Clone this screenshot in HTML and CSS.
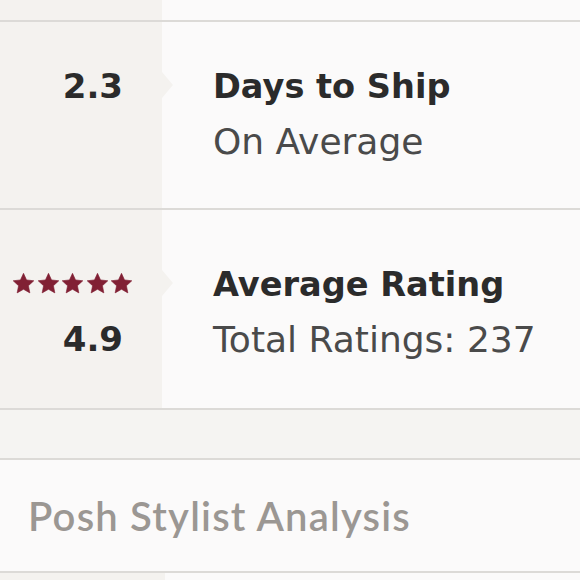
FILE: index.html
```html
<!DOCTYPE html>
<html lang="en">
<head>
<meta charset="utf-8">
<title>Seller stats</title>
<link rel="stylesheet" href="styles.css">
</head>
<body>
<div class="page">
  <div class="split split--top">
    <div class="side"></div>
    <div class="main"></div>
  </div>

  <div class="split stat stat--ship">
    <div class="side">
      <div class="line num">2.3</div>
    </div>
    <div class="main">
      <div class="line title">Days to Ship</div>
      <div class="line sub">On Average</div>
    </div>
  </div>

  <div class="split stat stat--rating">
    <div class="side">
      <div class="line stars">
        <svg class="star" viewBox="0 0 20 20"><path d="M10 0.3L12.9 6.6L19.8 7.42L14.7 12.1L16.05 18.93L10 15.5L3.95 18.93L5.3 12.1L0.2 7.42L7.1 6.6Z"/></svg>
        <svg class="star" viewBox="0 0 20 20"><path d="M10 0.3L12.9 6.6L19.8 7.42L14.7 12.1L16.05 18.93L10 15.5L3.95 18.93L5.3 12.1L0.2 7.42L7.1 6.6Z"/></svg>
        <svg class="star" viewBox="0 0 20 20"><path d="M10 0.3L12.9 6.6L19.8 7.42L14.7 12.1L16.05 18.93L10 15.5L3.95 18.93L5.3 12.1L0.2 7.42L7.1 6.6Z"/></svg>
        <svg class="star" viewBox="0 0 20 20"><path d="M10 0.3L12.9 6.6L19.8 7.42L14.7 12.1L16.05 18.93L10 15.5L3.95 18.93L5.3 12.1L0.2 7.42L7.1 6.6Z"/></svg>
        <svg class="star" viewBox="0 0 20 20"><path d="M10 0.3L12.9 6.6L19.8 7.42L14.7 12.1L16.05 18.93L10 15.5L3.95 18.93L5.3 12.1L0.2 7.42L7.1 6.6Z"/></svg>
      </div>
      <div class="line num">4.9</div>
    </div>
    <div class="main">
      <div class="line title">Average Rating</div>
      <div class="line sub">Total Ratings: 237</div>
    </div>
  </div>

  <div class="band"></div>

  <div class="section-head">Posh Stylist Analysis</div>

  <div class="split split--tail">
    <div class="side"></div>
    <div class="main"></div>
  </div>
</div>
</body>
</html>
```

FILE: styles.css
```css
html, body {
  margin: 0;
  padding: 0;
  background: #fbfafa;
}

.page {
  width: 580px;
  font-family: "DejaVu Sans", Lato, sans-serif;
  color: #2b2b2b;
}

.split {
  display: grid;
  grid-template-columns: 162px 1fr;
  border-bottom: 2px solid #dcdad7;
}

.side {
  background: #f4f2ef;
  position: relative;
}

.main {
  background: #fbfafa;
}

.split--top {
  height: 20px;
}

.split--tail {
  height: 7px;
  border-bottom: none;
  grid-template-columns: 165px 1fr;
}

.stat .side,
.stat .main {
  padding-top: var(--pad-top);
  padding-bottom: var(--pad-bottom);
}

.stat--ship {
  --pad-top: 37px;
  --pad-bottom: 39px;
}

.stat--rating {
  --pad-top: 47px;
  --pad-bottom: 41px;
}

.stat .side::after {
  content: "";
  position: absolute;
  left: 100%;
  top: calc(var(--pad-top) + 13px);
  border-left: 11px solid #f4f2ef;
  border-top: 13px solid transparent;
  border-bottom: 13px solid transparent;
}

.line {
  height: 55px;
  line-height: 55px;
  white-space: nowrap;
}

.side .line {
  text-align: right;
}

.num {
  font-size: 34px;
  font-weight: 700;
  padding-right: 39px;
  color: #2b2b2b;
}

.stars {
  display: flex;
  justify-content: flex-end;
  align-items: center;
  gap: 3.5px;
  padding-right: 30px;
  position: relative;
  top: -1px;
}

.star {
  width: 21px;
  height: 21px;
  fill: #812034;
  stroke: #812034;
  stroke-width: 0.6;
  stroke-linejoin: round;
  display: block;
}

.main {
  padding-left: 51px;
}

.title {
  font-size: 33.6px;
  font-weight: 700;
  color: #2b2b2b;
}

.sub {
  font-size: 36px;
  font-weight: 400;
  color: #4a4a4a;
}

.band {
  height: 48px;
  background: #f5f4f2;
  border-bottom: 2px solid #dcdad7;
}

.section-head {
  height: 111px;
  display: flex;
  align-items: center;
  padding-left: 28px;
  background: #fbfafa;
  border-bottom: 2px solid #dcdad7;
  font-family: Lato, sans-serif;
  font-size: 40px;
  font-weight: 600;
  letter-spacing: 1.2px;
  color: #9b9793;
}
```
